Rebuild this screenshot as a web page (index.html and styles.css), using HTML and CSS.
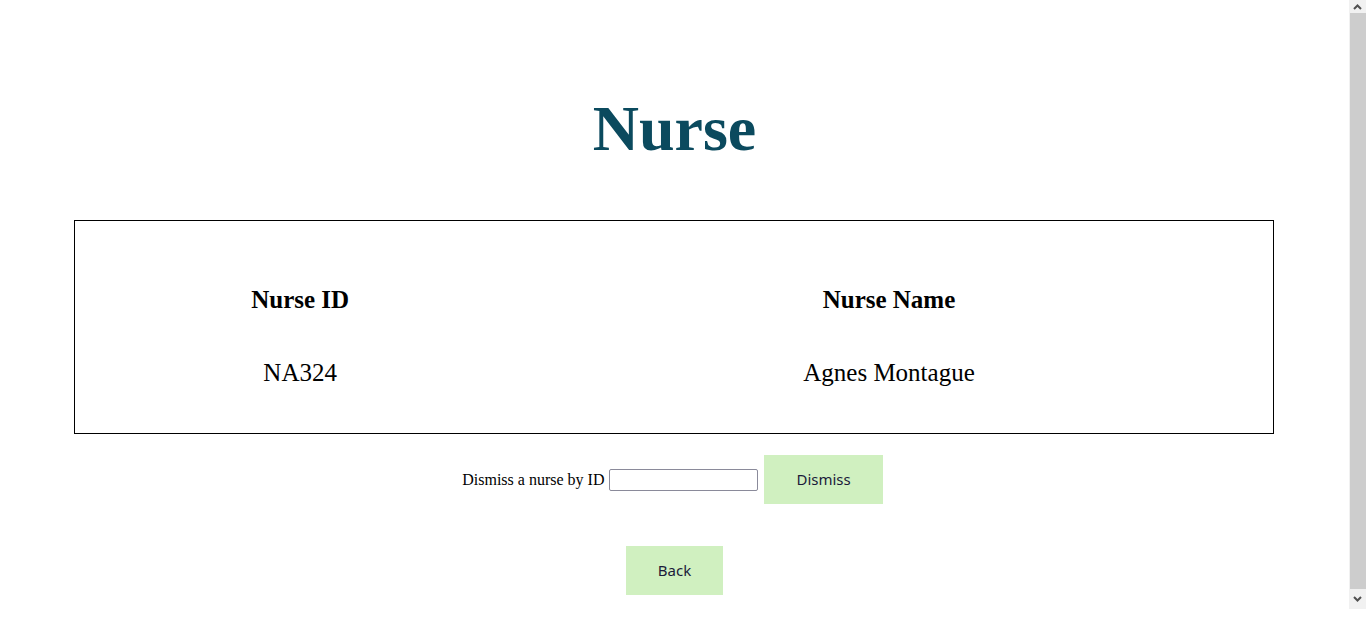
FILE: index.html
```html
<!DOCTYPE html>
<html lang="en">
<head>
<meta charset="utf-8">
<title>Nurse</title>
<link rel="stylesheet" href="styles.css">
</head>
<body>
<main class="page">
  <h1 class="title">Nurse</h1>
  <div class="card">
    <table class="nurse-table">
      <thead>
        <tr><th class="col-id">Nurse ID</th><th class="col-name">Nurse Name</th></tr>
      </thead>
      <tbody>
        <tr><td class="col-id">NA324</td><td class="col-name">Agnes Montague</td></tr>
      </tbody>
    </table>
  </div>
  <form class="dismiss-form">
    <label class="dismiss-label" for="nid">Dismiss a nurse by ID</label>
    <input class="dismiss-input" id="nid" type="text">
    <button class="btn" type="button">Dismiss</button>
  </form>
  <div class="back-row">
    <button class="btn" type="button">Back</button>
  </div>
</main>
<div class="scrollbar" aria-hidden="true">
  <div class="sb-btn sb-up">
    <svg width="9" height="6" viewBox="0 0 9 6"><path d="M1 5 L4.5 1.5 L8 5" fill="none" stroke="#505050" stroke-width="2"/></svg>
  </div>
  <div class="sb-thumb"></div>
  <div class="sb-btn sb-down">
    <svg width="9" height="6" viewBox="0 0 9 6"><path d="M1 1 L4.5 4.5 L8 1" fill="none" stroke="#505050" stroke-width="2"/></svg>
  </div>
</div>
</body>
</html>
```
FILE: styles.css
```css
html, body {
  margin: 0;
  padding: 0;
  background: #ffffff;
}
body {
  font-family: "Liberation Serif", "Times New Roman", serif;
  color: #000;
}
.page {
  width: 1349px;
  box-sizing: border-box;
  padding: 92px 8px 48px;
  display: flex;
  flex-direction: column;
  align-items: center;
}
.title {
  margin: 0 0 54px;
  font-size: 64px;
  font-weight: bold;
  color: #0b4a5e;
  line-height: 74px;
}
.card {
  width: 90%;
  border: 1px solid #000;
  padding: 59px 20px 40px 0;
  box-sizing: border-box;
  margin-right: 1px;
}
.nurse-table {
  width: 100%;
  border-collapse: collapse;
  font-size: 25px;
}
.nurse-table th,
.nurse-table td {
  padding: 0;
  height: 40px;
  line-height: 40px;
  text-align: center;
}
.nurse-table th {
  font-weight: bold;
}
.nurse-table tbody td {
  padding-top: 33px;
}
.col-id {
  width: 450px;
}
.dismiss-form {
  margin: 21px 0 0;
  display: flex;
  align-items: center;
  gap: 5px;
  padding-right: 4px;
}
.dismiss-label {
  font-size: 16px;
}
.dismiss-input {
  width: 149px;
  height: 22px;
  box-sizing: border-box;
  border: 1px solid #8a8a9a;
  border-radius: 2px;
  padding: 1px 2px;
  margin: 0 1px 0 0;
  font-size: 13px;
}
.btn {
  background: #d0f0c0;
  border: none;
  color: #1b1b3a;
  font-family: "Noto Sans", "Open Sans", sans-serif;
  font-size: 15px;
  line-height: 19px;
  padding: 15px 32px;
  margin: 0;
  cursor: pointer;
}
.back-row {
  margin-top: 42px;
  display: flex;
  justify-content: center;
}
.scrollbar {
  position: fixed;
  top: 0;
  right: 0;
  width: 17px;
  height: 609px;
  background: #f1f1f1;
  display: flex;
  flex-direction: column;
}
.sb-btn {
  display: flex;
  justify-content: center;
  align-items: center;
}
.sb-up {
  height: 13px;
}
.sb-down {
  height: 20px;
}
.sb-thumb {
  flex: 1;
  margin-left: 1px;
  background: #cdcdcd;
}
```
